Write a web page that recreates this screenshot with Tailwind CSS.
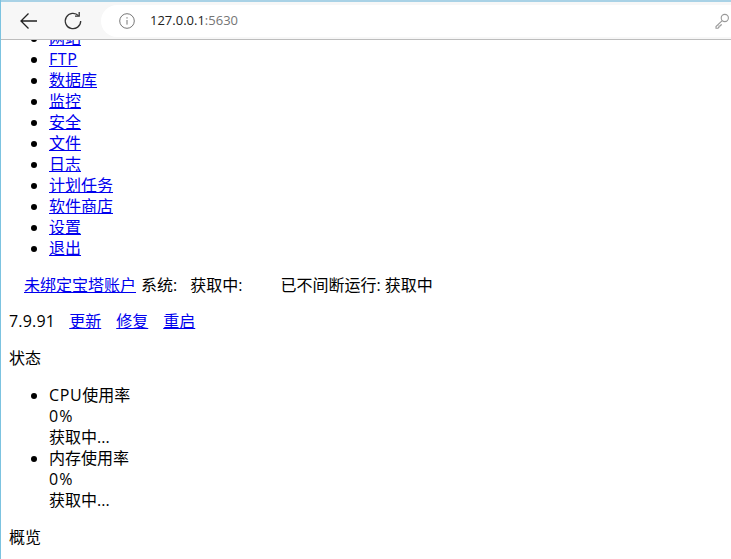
<!DOCTYPE html>
<html lang="en">
<head>
  <meta charset="UTF-8">
  <title>127.0.0.1:5630</title>
  <script src="https://cdn.jsdelivr.net/npm/@tailwindcss/browser@4"></script>
</head>
<body class="h-[559px] overflow-hidden bg-white border-l border-l-[#7cc3e0] font-['Open_Sans','Noto_Sans_CJK_SC',sans-serif] text-[16px] leading-[21px] text-black">
  <!-- Browser toolbar -->
  <header class="relative z-10 h-[40px] flex items-center bg-[#f7f7f7] border-b border-b-[#bdbdbd] border-t-2 border-t-[#a9d2e6]">
    <button class="w-[20px] h-[20px] ml-[18px]">
      <svg viewBox="0 0 20 20" class="w-[20px] h-[20px]" fill="none" stroke="#222" stroke-width="1.3"><path d="M18 10H2M9.5 2.5 2 10l7.5 7.5"/></svg>
    </button>
    <button class="w-[20px] h-[20px] ml-[24px]">
      <svg viewBox="0 0 20 20" class="w-[20px] h-[20px]" fill="none" stroke="#333" stroke-width="1.3"><path d="M15.5 4.6A7.7 7.7 0 1 0 17.7 10"/><path d="M16.2 1v4.2H12"/></svg>
    </button>
    <div class="ml-[18px] flex-1 h-[32px] flex items-center bg-white rounded-l-[16px]">
      <svg viewBox="0 0 16 16" class="w-[16px] h-[16px] ml-[18px]" fill="none" stroke="#777" stroke-width="1"><circle cx="8" cy="8" r="7.3"/><path d="M8 7v4.6M8 4.2v1.4"/></svg>
      <span class="ml-[15px] text-[13px] text-[#222]">127.0.0.1<span class="text-[#757575]">:5630</span></span>
      <svg viewBox="0 0 16 16" class="w-[16px] h-[16px] ml-auto mr-[1px]" fill="none" stroke="#999" stroke-width="1.1"><circle cx="10.8" cy="5" r="3.6"/><path d="M8.2 7.6 2 13.6v1.6h2l1-1v-1.2h1.2l1-1v-1.1"/></svg>
    </div>
  </header>

  <main class="pl-[8px] mt-[-12px]">
    <ul class="list-disc pl-[40px]">
      <li><a href="#" class="underline text-[#0000ee]">网站</a></li>
      <li><a href="#" class="underline text-[#0000ee] tracking-[0.6px]">FTP</a></li>
      <li><a href="#" class="underline text-[#0000ee]">数据库</a></li>
      <li><a href="#" class="underline text-[#0000ee]">监控</a></li>
      <li><a href="#" class="underline text-[#0000ee]">安全</a></li>
      <li><a href="#" class="underline text-[#0000ee]">文件</a></li>
      <li><a href="#" class="underline text-[#0000ee]">日志</a></li>
      <li><a href="#" class="underline text-[#0000ee]">计划任务</a></li>
      <li><a href="#" class="underline text-[#0000ee]">软件商店</a></li>
      <li><a href="#" class="underline text-[#0000ee]">设置</a></li>
      <li><a href="#" class="underline text-[#0000ee]">退出</a></li>
    </ul>
    <p class="mt-[16px] pl-[15px] flex whitespace-nowrap">
      <a href="#" class="underline text-[#0000ee]">未绑定宝塔账户</a>
      <span class="ml-[5px]">系统:</span>
      <span class="ml-[13px]">获取中:</span>
      <span class="ml-[38px]">已不间断运行: 获取中</span>
    </p>
    <p class="mt-[15px] flex">
      <span class="tracking-[0.2px]">7.9.91</span>
      <a href="#" class="ml-[14px] underline text-[#0000ee]">更新</a>
      <a href="#" class="ml-[15px] underline text-[#0000ee]">修复</a>
      <a href="#" class="ml-[15px] underline text-[#0000ee]">重启</a>
    </p>
    <p class="mt-[16px]">状态</p>
    <ul class="mt-[16px] list-disc pl-[40px]">
      <li><span class="tracking-[0.6px]">CPU</span>使用率<div class="tracking-[1px]">0%</div><div>获取中...</div></li>
      <li>内存使用率<div class="tracking-[1px]">0%</div><div>获取中...</div></li>
    </ul>
    <p class="mt-[16px]">概览</p>
  </main>
</body>
</html>
